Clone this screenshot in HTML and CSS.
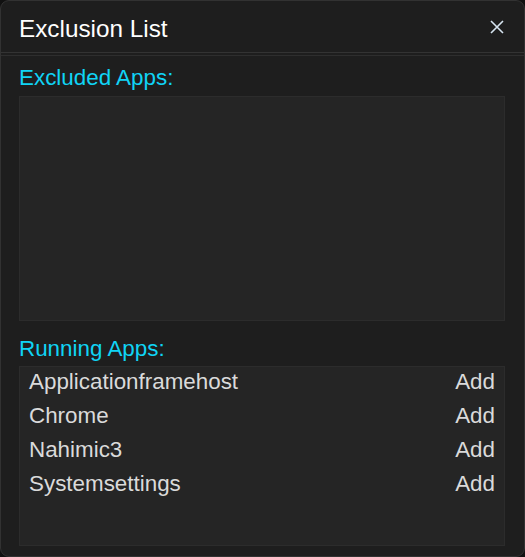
FILE: index.html
```html
<!DOCTYPE html>
<html>
<head>
<meta charset="utf-8">
<title>Exclusion List</title>
<link rel="stylesheet" href="styles.css">
</head>
<body>
<div class="window">
  <div class="header">
    <span class="title">Exclusion List</span>
    <svg class="close" width="14" height="14" viewBox="0 0 14 14" aria-label="Close">
      <path d="M1 1 L13 13 M13 1 L1 13" stroke="#d6e4f0" stroke-width="1.6" fill="none"/>
    </svg>
  </div>
  <div class="sep"></div>
  <div class="content">
    <div class="label label-first">Excluded Apps:</div>
    <div class="list list-excluded"></div>
    <div class="label label-second">Running Apps:</div>
    <div class="list list-running">
      <div class="row"><span>Applicationframehost</span><span class="add">Add</span></div>
      <div class="row"><span>Chrome</span><span class="add">Add</span></div>
      <div class="row"><span>Nahimic3</span><span class="add">Add</span></div>
      <div class="row"><span>Systemsettings</span><span class="add">Add</span></div>
    </div>
  </div>
</div>
</body>
</html>
```
FILE: styles.css
```css
html, body {
  margin: 0;
  padding: 0;
  background: #111111;
}
body {
  font-family: "Liberation Sans", Arial, sans-serif;
}
.window {
  width: 525px;
  height: 557px;
  box-sizing: border-box;
  border: 1px solid #323232;
  border-radius: 9px;
  background: #1e1e1e;
  display: flex;
  flex-direction: column;
  overflow: hidden;
}
.header {
  height: 52px;
  box-sizing: border-box;
  padding: 14px 20px 0 18px;
  display: flex;
  justify-content: space-between;
  align-items: flex-start;
  border-bottom: 1px solid #333333;
}
.title {
  font-size: 24.3px;
  line-height: 28px;
  color: #ffffff;
}
.close {
  margin-top: 5px;
  display: block;
}
.sep {
  margin-top: 2px;
  border-top: 1px solid #2e2e2e;
}
.content {
  padding: 0 19px 0 18px;
  display: flex;
  flex-direction: column;
}
.label {
  font-size: 22.4px;
  line-height: 26px;
  color: #10d4f5;
}
.label-first {
  margin-top: 9px;
}
.label-second {
  margin-top: 15px;
}
.list {
  background: #252525;
  border: 1px solid #2c2c2c;
  box-sizing: border-box;
}
.list-excluded {
  margin-top: 5px;
  height: 225px;
}
.list-running {
  margin-top: 4px;
  height: 180px;
}
.row {
  display: flex;
  justify-content: space-between;
  padding: 0 9px 4px 9px;
  font-size: 22.4px;
  line-height: 30px;
  color: #dadada;
}
```
